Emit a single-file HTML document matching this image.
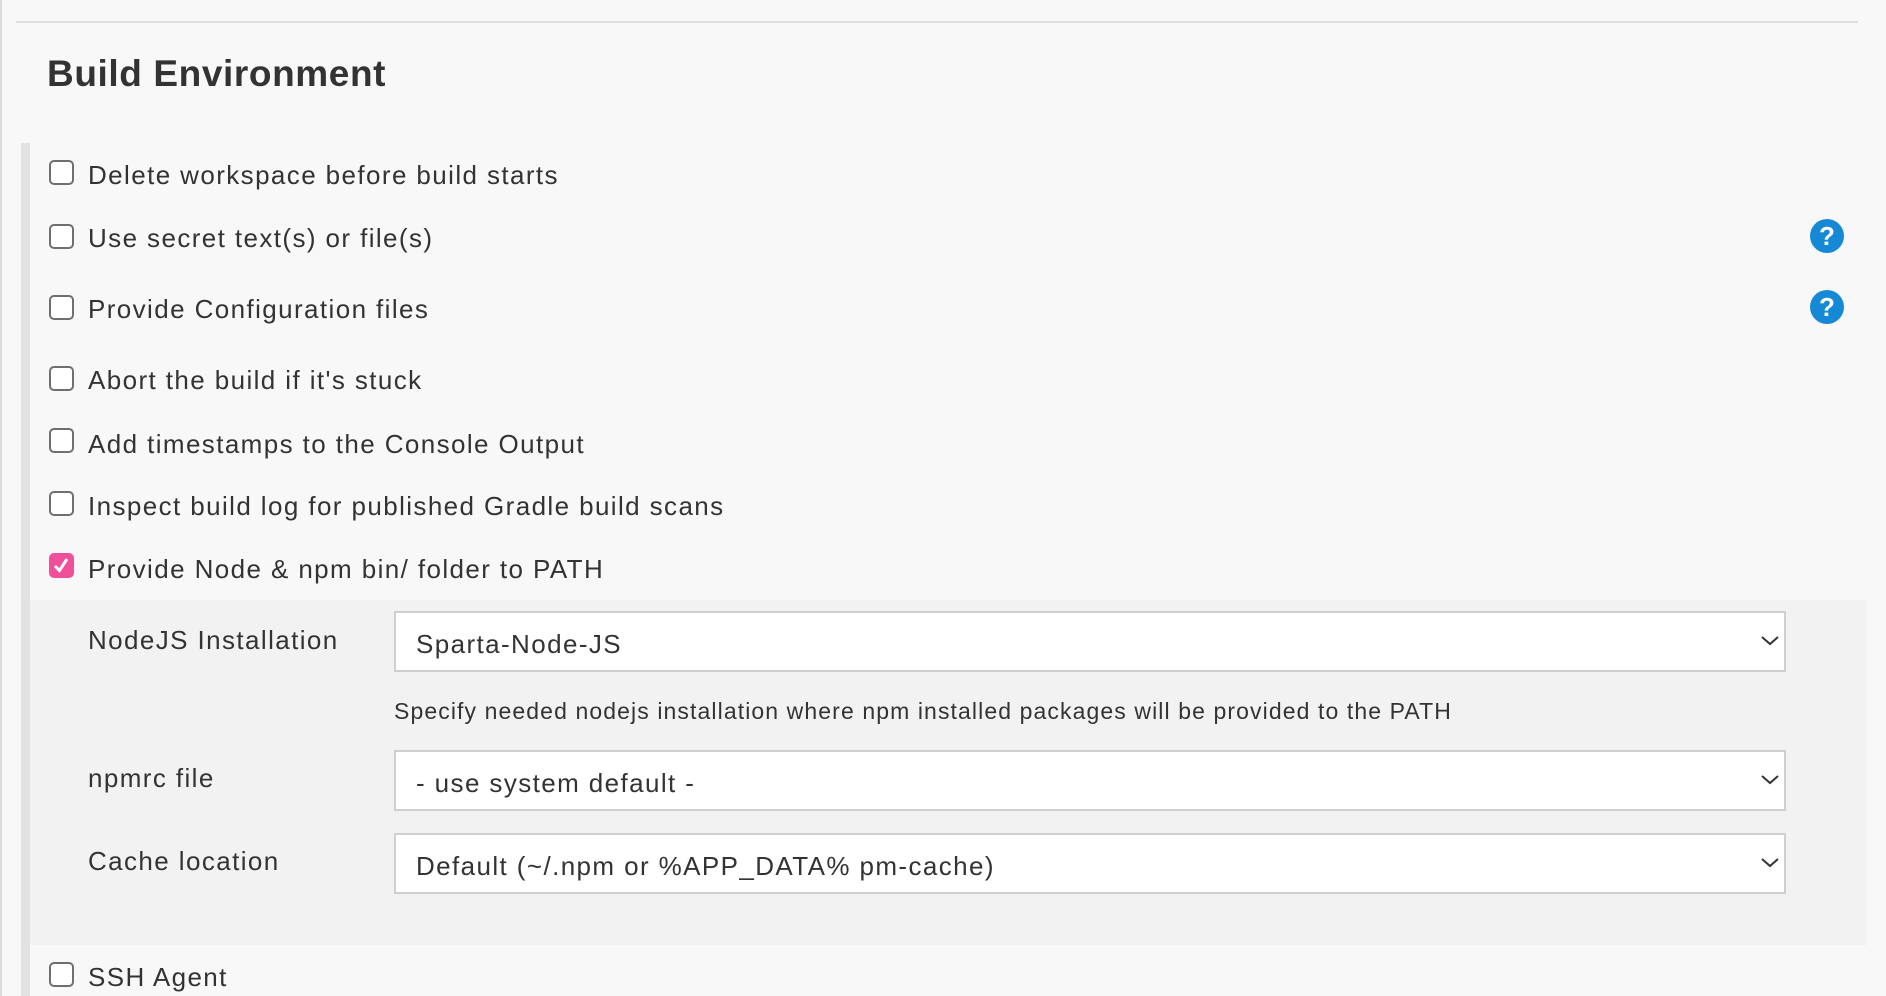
<!DOCTYPE html>
<html><head><meta charset="utf-8"><style>
*{margin:0;padding:0;box-sizing:border-box}
body{width:1886px;height:996px;background:#f8f8f8;position:relative;overflow:hidden;font-family:"Liberation Sans",sans-serif;color:#333}
.t{position:absolute;white-space:nowrap;line-height:1}
.lbl{font-size:26px;letter-spacing:1.4px}
.cb{position:absolute;left:49px;width:25px;height:25px;border:2px solid #6f6f6f;border-radius:5px;background:#fff}
.help{position:absolute;left:1810px;width:34px;height:34px;border-radius:50%;background:#1589d6;color:#fff;font-weight:bold;font-size:26px;text-align:center;line-height:34px}
.sel{position:absolute;left:394px;width:1392px;background:#fff;border:2px solid #cfcfcf}
.sel span{position:absolute;left:20px;font-size:26px;letter-spacing:1.4px;line-height:1;white-space:nowrap}
.sel svg{position:absolute;right:4px}
</style></head><body>
<div style="position:absolute;left:0;top:0;width:2px;height:996px;background:#dcdcdc"></div>
<div style="position:absolute;left:16px;top:21px;width:1842px;height:2px;background:#dedede"></div>
<div class="t" style="left:47px;top:55px;font-size:37px;font-weight:bold;letter-spacing:0.6px;color:#333">Build Environment</div>
<div style="position:absolute;left:21px;top:143px;width:9px;height:853px;background:#e2e2e2"></div>
<div style="position:absolute;left:30px;top:600px;width:1837px;height:345px;background:#f2f2f2"></div>

<div class="cb" style="top:160px"></div><div class="t lbl" style="left:88px;top:162px">Delete workspace before build starts</div>
<div class="cb" style="top:224px"></div><div class="t lbl" style="left:88px;top:225px">Use secret text(s) or file(s)</div>
<div class="help" style="top:219px">?</div>
<div class="cb" style="top:295px"></div><div class="t lbl" style="left:88px;top:296px">Provide Configuration files</div>
<div class="help" style="top:290px">?</div>
<div class="cb" style="top:366px"></div><div class="t lbl" style="left:88px;top:367px">Abort the build if it's stuck</div>
<div class="cb" style="top:428px"></div><div class="t lbl" style="left:88px;top:431px">Add timestamps to the Console Output</div>
<div class="cb" style="top:491px"></div><div class="t lbl" style="left:88px;top:493px">Inspect build log for published Gradle build scans</div>
<div class="cb" style="top:553px;background:#f0509a;border-color:#f0509a"><svg width="21" height="21" viewBox="0 0 21 21" style="position:absolute;left:0;top:0"><path d="M4 11 L8.5 15.5 L16 4" fill="none" stroke="#fff" stroke-width="3"/></svg></div>
<div class="t lbl" style="left:88px;top:556px">Provide Node &amp; npm bin/ folder to PATH</div>

<div class="t lbl" style="left:88px;top:627px">NodeJS Installation</div>
<div class="sel" style="top:611px;height:61px"><span style="top:18px">Sparta-Node-JS</span><svg width="20" height="12" style="top:22px" viewBox="0 0 20 12"><path d="M2 2 L10 9 L18 2" fill="none" stroke="#333" stroke-width="2"/></svg></div>
<div class="t" style="left:394px;top:700px;font-size:23px;letter-spacing:1.1px">Specify needed nodejs installation where npm installed packages will be provided to the PATH</div>
<div class="t lbl" style="left:88px;top:765px">npmrc file</div>
<div class="sel" style="top:750px;height:61px"><span style="top:18px">- use system default -</span><svg width="20" height="12" style="top:22px" viewBox="0 0 20 12"><path d="M2 2 L10 9 L18 2" fill="none" stroke="#333" stroke-width="2"/></svg></div>
<div class="t lbl" style="left:88px;top:848px">Cache location</div>
<div class="sel" style="top:833px;height:61px"><span style="top:18px">Default (~/.npm or %APP_DATA% pm-cache)</span><svg width="20" height="12" style="top:22px" viewBox="0 0 20 12"><path d="M2 2 L10 9 L18 2" fill="none" stroke="#333" stroke-width="2"/></svg></div>

<div class="cb" style="top:962px"></div><div class="t lbl" style="left:88px;top:964px">SSH Agent</div>
</body></html>
